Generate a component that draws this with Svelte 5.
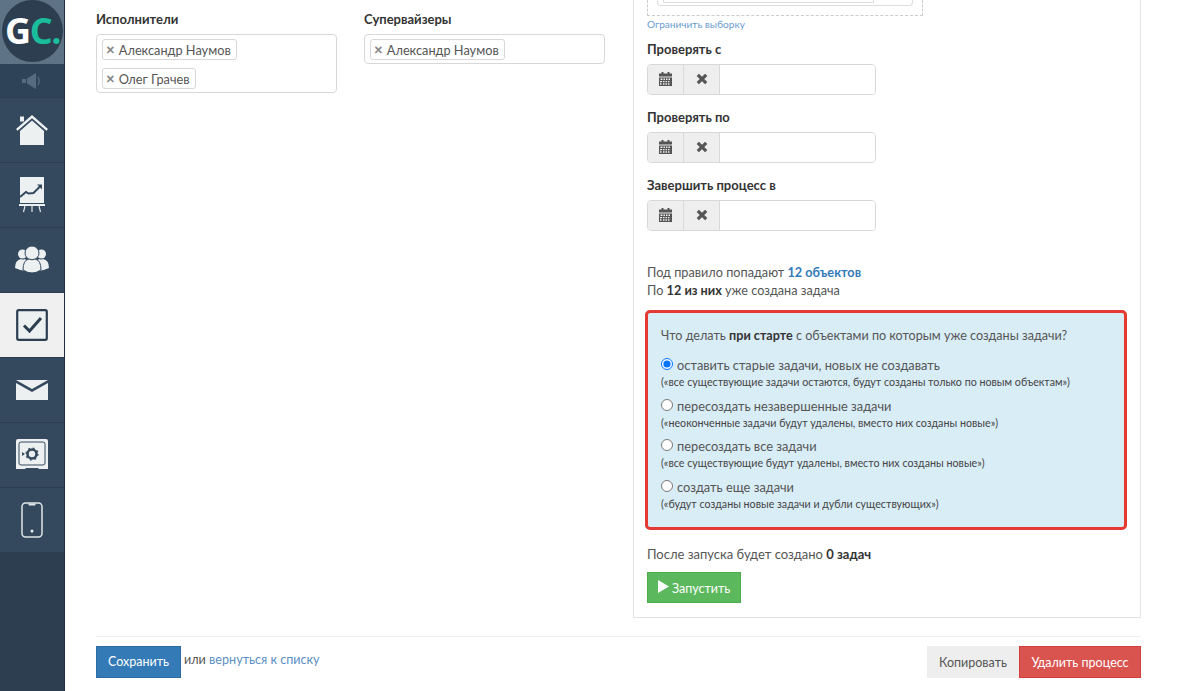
<script>
  const radios = [
    { title: 'оставить старые задачи, новых не создавать', note: '(«все существующие задачи остаются, будут созданы только по новым объектам»)', checked: true },
    { title: 'пересоздать незавершенные задачи', note: '(«неоконченные задачи будут удалены, вместо них созданы новые»)' },
    { title: 'пересоздать все задачи', note: '(«все существующие будут удалены, вместо них созданы новые»)' },
    { title: 'создать еще задачи', note: '(«будут созданы новые задачи и дубли существующих»)' }
  ];
  const dates = ['Проверять с', 'Проверять по', 'Завершить процесс в'];
</script>

<div class="layout">
  <aside class="sidebar">
    <div class="logo-cell">
      <div class="logo"><span class="g">G</span><span class="c">C<em>.</em></span></div>
    </div>
    <div class="nav-item notice">
      <svg width="22" height="18" viewBox="0 0 22 18" fill="#566b80">
        <rect x="1" y="7" width="4" height="4" />
        <path d="M6 6.500 15 1v16L6 11.500z" />
        <path d="M17 5q2.500 4 0 8" fill="none" stroke="#566b80" stroke-width="1.200" />
      </svg>
    </div>
    <div class="nav-item">
      <svg width="34" height="31" viewBox="0 0 34 31" fill="#ecf0f1">
        <path d="M17 0 1 14l1.600 1.800L17 3.200l14.400 12.600L33 14z" />
        <rect x="5" y="1.500" width="4" height="5" />
        <path d="M17 5.500 5 16v14h24V16z" />
      </svg>
    </div>
    <div class="nav-item">
      <svg width="26" height="36" viewBox="0 0 26 36" fill="#ecf0f1">
        <path d="M1 0h24v26H1z" />
        <path d="M1 20l6-5 2.500 1.500 5-.5 7-7" fill="none" stroke="#34495e" stroke-width="2" />
        <path d="M18 7.500h5v5z" fill="#34495e" />
        <rect x="0" y="27" width="26" height="2" />
        <path d="M6 29 4.500 35M13 29v6M20 29l1.500 6" stroke="#ecf0f1" stroke-width="1.100" />
      </svg>
    </div>
    <div class="nav-item">
      <svg width="34" height="30" viewBox="0 0 34 30" fill="#ecf0f1">
        <circle cx="7.500" cy="9" r="4.500" />
        <circle cx="26.500" cy="9" r="4.500" />
        <path d="M0 23q0-8 6-9 2 1 4 0 2 1 2 3l-1 9q-6-.5-11-3zM34 23q0-8-6-9-2 1-4 0-2 1-2 3l1 9q6-.5 11-3z" />
        <circle cx="17" cy="8" r="7" stroke="#34495e" />
        <path d="M8 25q0-10 6-11 3 1.500 6 0 6 1 6 11-9 6-18 0z" stroke="#34495e" />
      </svg>
    </div>
    <div class="nav-item active">
      <svg width="32" height="32" viewBox="0 0 32 32">
        <rect x="1.200" y="1.200" width="29.600" height="29.600" rx="1.500" fill="#ecf0f1" stroke="#2c3e50" stroke-width="2.200" />
        <path d="M8 16.500l5.500 5.500L25 9" fill="none" stroke="#2c3e50" stroke-width="3" />
      </svg>
    </div>
    <div class="nav-item">
      <svg width="32" height="20" viewBox="0 0 32 20" fill="#ecf0f1">
        <path d="M0 0h32L16 9z" />
        <path d="M0 3v17h32V3L16 12z" />
      </svg>
    </div>
    <div class="nav-item">
      <svg width="32" height="32" viewBox="0 0 32 32">
        <path d="M2 0h28a2 2 0 0 1 2 2v28h-9l-1-1H10l-1 1H0V2a2 2 0 0 1 2-2z" fill="#ecf0f1" />
        <rect x="3" y="3" width="26" height="23" rx="2" fill="none" stroke="#34495e" stroke-width="1" />
        <circle cx="16" cy="15" r="4.500" fill="none" stroke="#34495e" stroke-width="2.600" />
        <circle cx="16" cy="15" r="6" fill="none" stroke="#34495e" stroke-width="1.200" stroke-dasharray="2 2.700" />
        <path d="M6 13l3 2-3 2z" fill="#34495e" />
      </svg>
    </div>
    <div class="nav-item">
      <svg width="22" height="36" viewBox="0 0 22 36">
        <rect x="1" y="1" width="20" height="34" rx="3.500" fill="none" stroke="#dfe4e7" stroke-width="1.500" />
        <path d="M7 1.500h8l-1 2H8z" fill="#dfe4e7" />
        <circle cx="11" cy="29" r="1.500" fill="#ecf0f1" />
      </svg>
    </div>
  </aside>

  <main class="content">
    <div class="columns">
      <div class="field-col">
        <div class="field-label">Исполнители</div>
        <div class="token-box">
          <span class="token"><i>×</i>Александр Наумов</span>
          <span class="token"><i>×</i>Олег Грачев</span>
        </div>
      </div>
      <div class="field-col">
        <div class="field-label">Супервайзеры</div>
        <div class="token-box">
          <span class="token"><i>×</i>Александр Наумов</span>
        </div>
      </div>

      <section class="panel">
        <div class="dashed"><div class="inner"><div class="inner2"></div></div></div>
        <a class="limit" href="#limit">Ограничить выборку</a>

        {#each dates as label}
          <div class="date-field">
            <div class="field-label">{label}</div>
            <div class="input-group">
              <span class="addon">
                <svg width="13" height="14" viewBox="0 0 13 14" fill="#555">
                  <rect x="2.500" y="0" width="2" height="2.500" />
                  <rect x="8.500" y="0" width="2" height="2.500" />
                  <rect x="0" y="1.500" width="13" height="3" />
                  <path d="M0 5.500h13V14H0zm1.500 1v1.400h2V6.500zm3 0v1.400h1.500V6.500zm2.500 0v1.400h1.500V6.500zm2.500 0v1.400h1.500V6.500zm-8.500 2.400v1.400h2V8.900zm3 0v1.400h1.500V8.900zm2.500 0v1.400h1.500V8.900zm2.500 0v1.400h1.500V8.900zm-8 2.400v1.400h1.500v-1.400zm3 0v1.400h1.500v-1.400zm2.500 0v1.400h1.500v-1.400zm2.500 0v1.400h1.500v-1.400z" fill-rule="evenodd" />
                </svg>
              </span>
              <span class="addon">
                <svg width="12" height="12" viewBox="0 0 12 12">
                  <path d="M1.800 1.800l8.400 8.400M10.200 1.800l-8.400 8.400" stroke="#555" stroke-width="3.200" />
                </svg>
              </span>
              <input type="text" />
            </div>
          </div>
        {/each}

        <p class="summary">
          Под правило попадают <a href="#objects"><b>12 объектов</b></a><br />
          По <b>12 из них</b> уже создана задача
        </p>

        <div class="alert">
          <div class="question">Что делать <b>при старте</b> с объектами по которым уже созданы задачи?</div>
          {#each radios as r}
            <label class="radio">
              <input type="radio" name="mode" checked={r.checked} />
              <span class="radio-title">{r.title}</span>
              <small>{r.note}</small>
            </label>
          {/each}
        </div>

        <p class="after">После запуска будет создано <b>0 задач</b></p>
        <button class="btn run">
          <svg width="11" height="13" viewBox="0 0 11 13" fill="#fff"><path d="M0 0l11 6.500L0 13z" /></svg>
          Запустить
        </button>
      </section>
    </div>

    <footer class="actions">
      <button class="btn save">Сохранить</button>
      <span class="or">или <a href="#list">вернуться к списку</a></span>
      <div class="right">
        <button class="btn copy">Копировать</button>
        <button class="btn remove">Удалить процесс</button>
      </div>
    </footer>
  </main>
</div>

<style>
  :global(body) {
    background: #fff;
    font-family: Lato, "Open Sans", sans-serif;
    color: #555;
    overflow: hidden;
  }

  .layout {
    display: flex;
    height: 691px;
    overflow: hidden;
  }

  .sidebar {
    width: 64px;
    flex-shrink: 0;
    background: #2c3e50;
    border-right: 1px solid #1f2d3a;
    box-sizing: content-box;
  }

  .logo-cell {
    height: 64px;
    background: #5f7387;
    position: relative;
  }

  .logo {
    position: absolute;
    left: 2px;
    top: 0;
    width: 61px;
    height: 62px;
    border-radius: 50%;
    background: #2c3e50;
    font: 700 36px/62px "Open Sans", sans-serif;
    text-align: center;
    letter-spacing: -1.500px;
  }

  .logo .g { color: #fff; }
  .logo .c { color: #1abc9c; }
  .logo em { font-style: normal; }

  .nav-item {
    height: 64px;
    background: #34495e;
    border-bottom: 1px solid #2c3e50;
    display: flex;
    align-items: center;
    justify-content: center;
  }

  .nav-item.notice {
    height: 33px;
    background: #2f4358;
  }

  .nav-item.active {
    background: #f0f0f0;
  }

  .content {
    flex: 1;
    padding: 0 58px 0 31px;
    min-width: 0;
  }

  .columns {
    display: flex;
    align-items: flex-start;
    height: 636px;
    border-bottom: 1px solid #eee;
    box-sizing: content-box;
  }

  .field-col {
    width: 241px;
    margin-right: 27px;
    padding-top: 12px;
  }

  .field-label {
    font-size: 13px;
    font-weight: 700;
    color: #333;
    line-height: 15px;
  }

  .token-box {
    margin-top: 7px;
    border: 1px solid #d8d8d8;
    border-radius: 4px;
    padding: 4px 5px 3px;
    display: flex;
    flex-wrap: wrap;
    align-items: flex-start;
    gap: 8px;
  }

  .token {
    border: 1px solid #d8d8d8;
    border-radius: 3px;
    height: 19px;
    line-height: 18px;
    padding: 0 5px 0 3px;
    font-size: 12.750px;
    color: #555;
    white-space: nowrap;
  }

  .token i {
    font-style: normal;
    font-weight: 900;
    font-size: 15px;
    color: #888;
    margin: 0 4px 0 0;
  }

  .panel {
    width: 480px;
    height: 617px;
    margin-left: 1px;
    border: 1px solid #e3e3e3;
    border-top: 0;
    padding: 0 13px;
    position: relative;
  }

  .dashed {
    margin-top: 0;
    height: 16px;
    width: 276px;
    border: 1px dashed #ccc;
    border-top: 0;
    padding: 0 9px;
    box-sizing: border-box;
  }

  .inner {
    height: 6px;
    border: 1px solid #ddd;
    border-top: 0;
    border-radius: 0 0 4px 4px;
    padding: 0 38px 0 5px;
    box-sizing: border-box;
  }

  .inner2 {
    height: 2px;
    border-bottom: 1px solid #ddd;
    border-left: 1px solid #ddd;
    border-right: 1px solid #ddd;
  }

  .limit {
    display: block;
    margin-top: 1px;
    font-size: 10.100px;
    line-height: 14px;
    color: #6a9bd0;
    text-decoration: none;
  }

  .date-field {
    margin-top: 11px;
    margin-bottom: 15px;
  }

  .date-field .field-label {
    margin-bottom: 7px;
  }

  .input-group {
    display: flex;
    width: 229px;
    height: 31px;
    border: 1px solid #d8d8d8;
    border-radius: 4px;
    overflow: hidden;
    box-sizing: border-box;
  }

  .addon {
    width: 36px;
    background: #eee;
    border-right: 1px solid #d8d8d8;
    display: flex;
    align-items: center;
    justify-content: center;
    box-sizing: border-box;
    padding-bottom: 1px;
  }

  .input-group input {
    flex: 1;
    min-width: 0;
    border: 0;
    outline: 0;
    padding: 0;
  }

  .summary {
    margin: 32px 0 0;
    font-size: 12.700px;
    line-height: 18px;
  }

  .summary a {
    color: #337ab7;
    text-decoration: none;
  }

  b {
    font-weight: 700;
    color: #333;
  }

  .summary a b {
    color: #337ab7;
  }

  .alert {
    margin: 11px 0 0 -2px;
    width: 482px;
    height: 220px;
    box-sizing: border-box;
    background: #d9edf7;
    border: 3px solid #e53a32;
    border-radius: 5px;
    padding: 14px 13px 0;
  }

  .question {
    font-size: 12.600px;
    line-height: 18px;
    margin-bottom: 9px;
  }

  .radio {
    display: block;
    height: 40.500px;
    position: relative;
  }

  .radio input {
    margin: 0;
    width: 12px;
    height: 12px;
    vertical-align: 0;
  }

  .radio-title {
    font-size: 12.800px;
    line-height: 18px;
  }

  .radio small {
    display: block;
    font-size: 10.700px;
    line-height: 16px;
    color: #444;
  }

  .after {
    margin: 15px 0 0;
    font-size: 13px;
    line-height: 18px;
  }

  .btn {
    border: 1px solid transparent;
    border-radius: 0;
    font-family: inherit;
    font-size: 12.500px;
    padding: 0;
    color: #fff;
  }

  .run {
    margin-top: 9px;
    width: 94px;
    height: 31px;
    background: #5cb85c;
    border-color: #4cae4c;
  }

  .actions {
    display: flex;
    align-items: flex-start;
    padding-top: 9px;
  }

  .save {
    width: 85px;
    height: 32px;
    background: #337ab7;
    border-color: #2e6da4;
    padding-bottom: 1px;
  }

  .or {
    margin-left: 3px;
    font-size: 12.600px;
    line-height: 28px;
    color: #555;
  }

  .or a {
    color: #5b8fc4;
    text-decoration: none;
  }

  .right {
    margin-left: auto;
    display: flex;
  }

  .copy {
    width: 92px;
    height: 32px;
    background: #eee;
    color: #555;
    border: 0;
  }

  .remove {
    width: 122px;
    height: 32px;
    background: #d9534f;
    border-color: #d43f3a;
  }
</style>
